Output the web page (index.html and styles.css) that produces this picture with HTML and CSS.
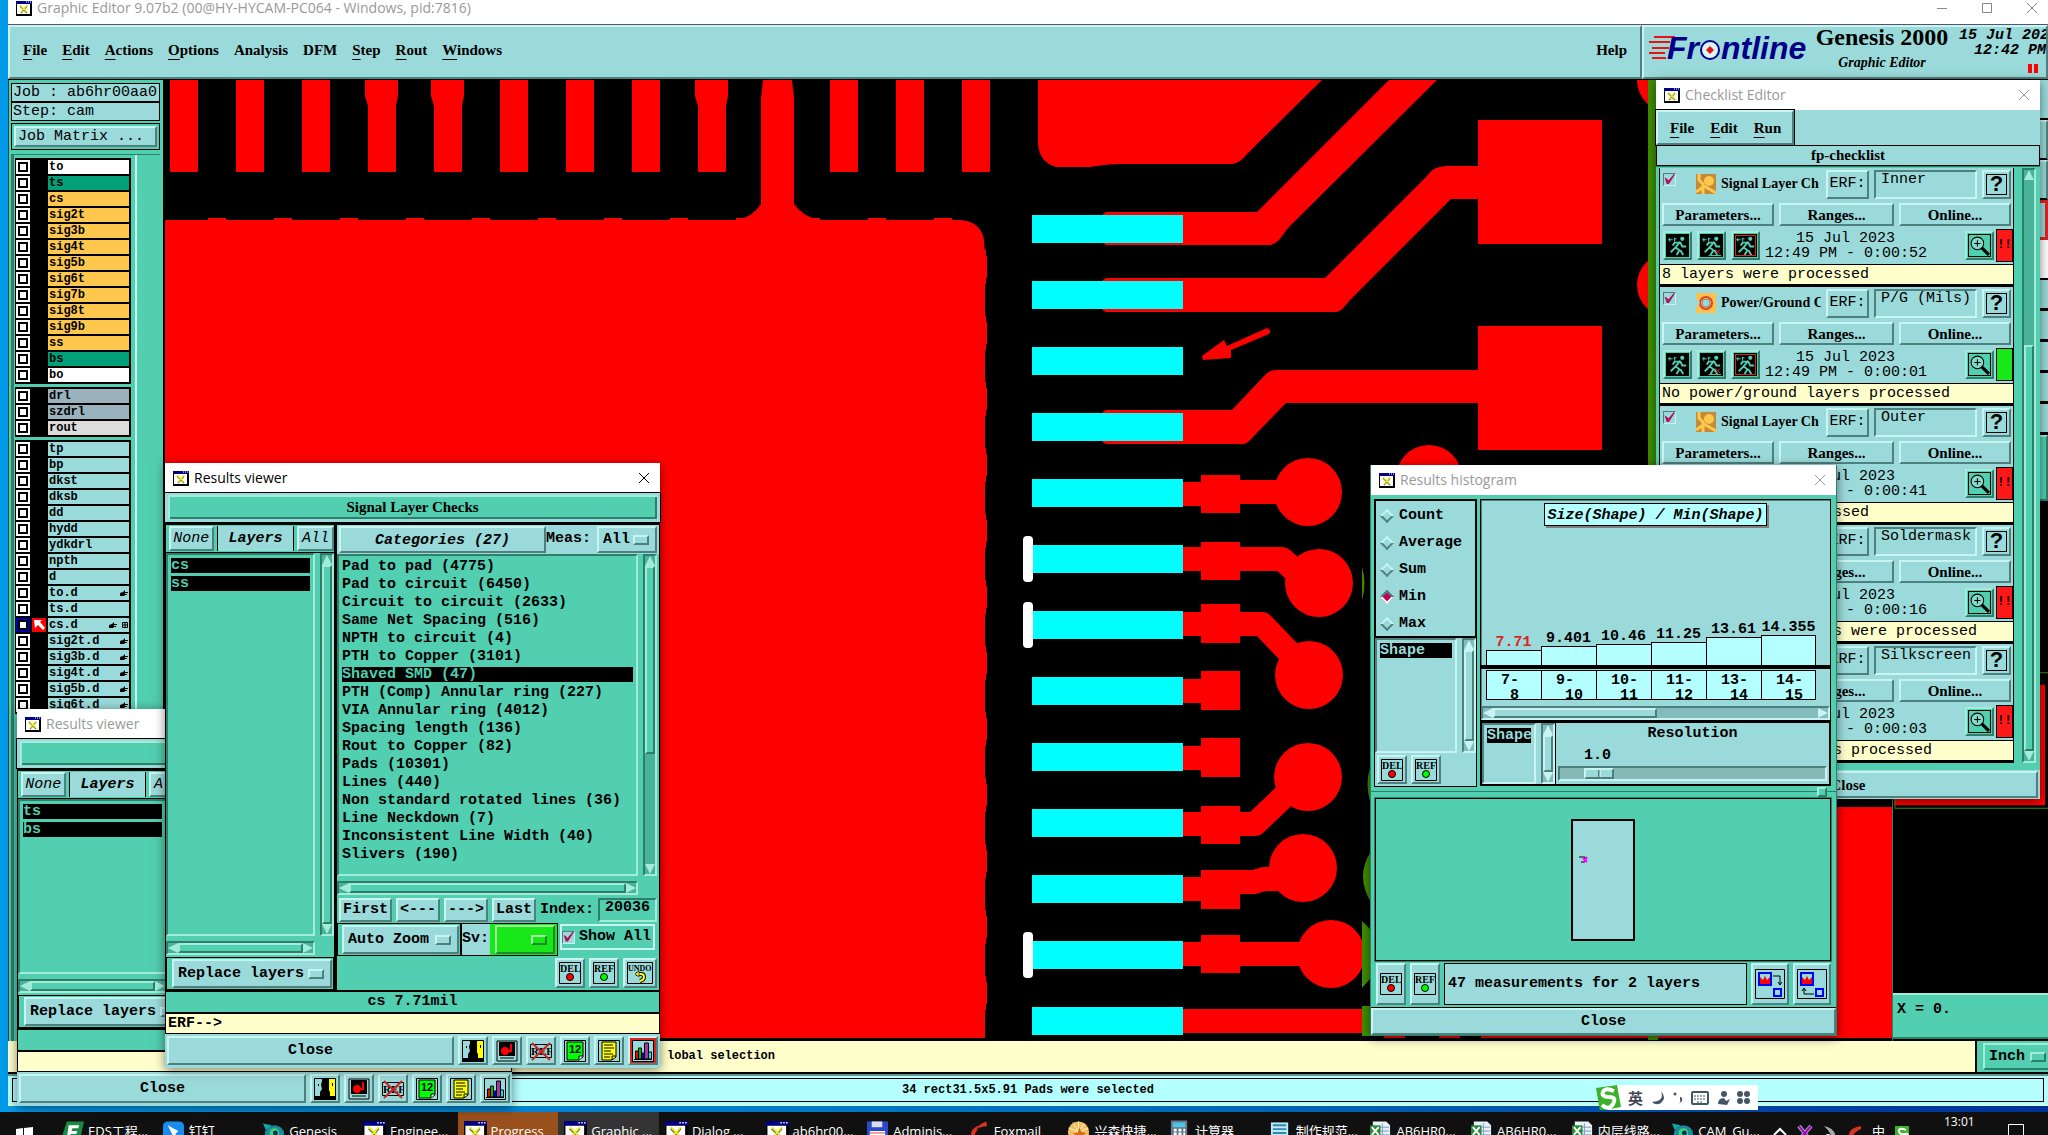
FILE: index.html
```html
<!DOCTYPE html>
<html lang="en">
<head>
  <meta charset="UTF-8">
  <title>Graphic Editor 9.07b2</title>
  <link rel="stylesheet" href="styles.css">
</head>
<body>

<!-- shared icons -->
<svg class="defs" aria-hidden="true">
  <symbol id="i-app" viewBox="0 0 16 15"><path d="M0 0h16v15H0z" fill="#000"/><path d="M1 3h13v10H1z" fill="#fff"/><path d="M0 0h16v3H0z" fill="#008"/><path d="M10 1h1M12 1h1M14 1h1" stroke="#fff"/><path d="M4 5l7 7M11 5l-6 7" stroke="#774" stroke-width="1.500"/><path d="M4 4l7 7M11 4l-6 7" stroke="#ee2" stroke-width="1.200"/></symbol>
  <symbol id="i-close" viewBox="0 0 12 12"><path d="M1 1l10 10M11 1L1 11" stroke="currentColor" fill="none"/></symbol>
  <symbol id="i-hand" viewBox="0 0 8 7"><path d="M0 3l3-1 2-2v2h3v1H5v1h2v1H5l-1 1H0z"/></symbol>
  <symbol id="i-face" viewBox="0 0 22 22"><path d="M0 0h22v22H0z" fill="#9bdada"/><path d="M13 0h9v18h-9z" fill="#ff0"/><path d="M8 0h7v18H8z"/><path d="M8 3l-1 4 1 4-2 3v4h10v-4l-2-3 1-4-1-4z"/><path d="M0 18h22v4H0z"/><path d="M4 6h1v2H4zM18 5h1v3h-1z"/><path d="M.5 .5h21v21H.5z" fill="none" stroke="#000"/></symbol>
  <symbol id="i-stop" viewBox="0 0 22 22"><path d="M1 1h20v20H1z" fill="#9bdada" stroke="#000"/><path d="M3 2h16v14H3z"/><circle cx="9" cy="11" r="4" fill="#f00"/><path d="M10 11h5V4" fill="none" stroke="#f00" stroke-width="2"/><path d="M4 18h14" stroke="#000"/></symbol>
  <symbol id="i-norefs" viewBox="0 0 22 22"><path d="M.5 4.500h21v13H.5z" fill="none" stroke="#000"/><text x="1" y="15" font-size="11" font-family="Liberation Serif">REF</text><path d="M2 3l18 17M20 3L2 20" stroke="#c22" stroke-width="2"/></symbol>
  <symbol id="i-num" viewBox="0 0 22 22"><path d="M.5 .5h21v21H.5z" fill="none" stroke="#000"/><path d="M3 2h16v15l-4 3H3z" fill="#0f0" stroke="#000"/><path d="M15 20v-4h4" fill="#fff" stroke="#000"/><text x="5" y="13" font-size="11" font-weight="bold" font-family="Liberation Sans">12</text></symbol>
  <symbol id="i-note" viewBox="0 0 22 22"><path d="M.5 .5h21v21H.5z" fill="none" stroke="#000"/><path d="M4 2h14v15l-4 3H4z" fill="#ff0" stroke="#000"/><path d="M6 5h9M6 8h10M6 11h7M6 14h9M6 17h6M14 20v-4h4" fill="none" stroke="#000"/></symbol>
  <symbol id="i-bars" viewBox="0 0 22 22"><path d="M.5 .5h21v21H.5z" fill="none" stroke="#000"/><g stroke="#000"><path d="M3.500 11h3v8h-3z" fill="#f00"/><path d="M6.500 8h3v11h-3z" fill="#0b0"/><path d="M9.500 13h3v6h-3z" fill="#00c"/><path d="M12.500 3h4v16h-4z" fill="#a3a"/><path d="M16.500 12h3v7h-3z" fill="#0ee"/></g><path d="M2 19.500h18" stroke="#000"/></symbol>
  <symbol id="i-del" viewBox="0 0 22 22"><path d="M.5 .5h21v21H.5z" fill="none" stroke="#000"/><text x="1" y="10" font-size="10" font-family="Liberation Serif">DEL</text><circle cx="11" cy="15" r="3.500" fill="#f00" stroke="#000"/></symbol>
  <symbol id="i-ref" viewBox="0 0 22 22"><path d="M.5 .5h21v21H.5z" fill="none" stroke="#000"/><text x="1" y="10" font-size="10" font-family="Liberation Serif">REF</text><circle cx="11" cy="15" r="3.500" fill="#0f0" stroke="#000"/></symbol>
  <symbol id="i-undo" viewBox="0 0 26 22"><path d="M.5 .5h25v21H.5z" fill="none" stroke="#000"/><text x="1" y="9" font-size="8" font-family="Liberation Serif">UNDO</text><path d="M9 12h5q3 0 3 3t-4 4" fill="none" stroke="#000" stroke-width="4"/><path d="M9 12h5q3 0 3 3t-4 4" fill="none" stroke="#ff0" stroke-width="2"/><path d="M12 9l-4 3 4 3z" fill="#ff0" stroke="#000" stroke-width=".6"/></symbol>
  <symbol id="i-run" viewBox="0 0 24 24"><path d="M0 0h24v24H0z"/><circle cx="17" cy="5" r="2.200" fill="#52ceb0"/><path d="M15 8l-5 6 4 3-3 5M10 14l-5 5M14 9l-5 0-2 3M15 9l2 4 4 0M15 17l3 5" fill="none" stroke="#52ceb0" stroke-width="2"/><path d="M2 6h5M4 4v4M8 5h3M9 4v4" stroke="#52ceb0"/></symbol>
  <symbol id="i-run-to" viewBox="0 0 24 24"><use href="#i-run"/><path d="M9 22.500h13" stroke="#52ceb0"/><path d="M16 16l5 5M21 16l-5 5" stroke="#d22"/></symbol>
  <symbol id="i-zoom" viewBox="0 0 22 22"><path d="M.5 .5h21v21H.5z" fill="none" stroke="#000"/><circle cx="9" cy="9" r="6" fill="#7fdcc8" stroke="#000"/><path d="M6 9h6M9 6v6" stroke="#000"/><path d="M13 13l7 7" stroke="#000" stroke-width="3"/></symbol>
  <symbol id="i-signal" viewBox="0 0 20 20"><path d="M0 0h20v20H0z" fill="#c48a3c"/><path d="M3 0v6l4 4v10M0 18l7-5M8 12l12 7" stroke="#ffc84c" stroke-width="3" fill="none"/><circle cx="13" cy="7" r="5" fill="#ffc84c"/></symbol>
  <symbol id="i-power" viewBox="0 0 20 20"><path d="M0 0h20v20H0z" fill="#ffc04c"/><circle cx="10" cy="10" r="6" fill="none" stroke="#d42" stroke-width="2"/><circle cx="10" cy="10" r="4" fill="#9bdada" stroke="#888"/><path d="M0 5l4 5-4 5z" fill="#9bdada"/></symbol>
  <symbol id="i-sheet" viewBox="0 0 24 24"><path d="M4 1h14l4 4v18H4z" fill="#e8f0f8"/><path d="M8 7h13M8 11h13M8 15h13M14 3v18" stroke="#7b9cc8"/><path d="M1 5h11v12H1z" fill="#2a8a3a"/><path d="M3 7l7 8M10 7l-7 8" stroke="#fff" stroke-width="2"/></symbol>
  <symbol id="i-genesis" viewBox="0 0 24 24"><path d="M1 3l9 2-6 5z" fill="#1aa"/><ellipse cx="13" cy="14" rx="10" ry="9" fill="#1a8a9c"/><circle cx="13" cy="13" r="5" fill="#3fd07a"/><circle cx="14" cy="13" r="2.500" fill="#135"/></symbol>
</svg>

<div class="screen">

  <main class="editor">
    <div class="titlebar titlebar-main">
      <svg class="app-icon"><use href="#i-app"/></svg>
      <span>Graphic Editor 9.07b2 (00@HY-HYCAM-PC064 - Windows, pid:7816)</span>
      <svg class="win-buttons" width="102" height="14" viewBox="0 0 102 14" fill="none" stroke="#888"><path d="M1 7.500h10M46.500 2.500h9v9h-9zM91 2l10 10M101 2L91 12"/></svg>
    </div>

    <header class="topbar">
      <nav class="menubar raised">
        <a href="#"><u>F</u>ile</a><a href="#"><u>E</u>dit</a><a href="#"><u>A</u>ctions</a><a href="#"><u>O</u>ptions</a><a href="#">Analysis</a><a href="#">DFM</a><a href="#"><u>S</u>tep</a><a href="#"><u>R</u>out</a><a href="#"><u>W</u>indows</a>
        <a class="help" href="#">Help</a>
      </nav>
      <div class="brand raised">
        <svg width="162" height="34" viewBox="0 0 162 34">
          <path d="M6 4h21M1 9h21M4 15h17M1 20h16M4 25h14" stroke="#e11" stroke-width="2"/>
          <g fill="#008" font-family="Liberation Sans" font-weight="bold" font-style="italic" font-size="32"><text x="19" y="26">Fr</text><text x="73" y="26">ntline</text></g>
          <circle cx="62" cy="17" r="9" fill="#d8f4f4" stroke="#008" stroke-width="2"/><path d="M62 13l4 4-4 4-4-4z" fill="#e11"/>
        </svg>
        <div class="brand-name"><b>Genesis 2000</b><i>Graphic Editor</i></div>
        <div class="brand-date"><span>15 Jul 2023</span><span>12:42 PM</span><svg width="10" height="9" viewBox="0 0 10 9"><path d="M0 0h4v9H0zM6 0h4v9H6z" fill="#f00"/></svg></div>
      </div>
    </header>

    <div class="workspace">
      <aside class="sidebar">
        <div class="job-line">Job : ab6hr00aa0</div>
        <div class="job-line">Step: cam</div>
        <div class="job-matrix"><button class="raised teal">Job Matrix ...</button></div>
        <div class="layer-panel">
          <div class="layers">
            <div class="layer-group">
              <label class="layer white"><input type="checkbox"><span>to</span></label>
              <label class="layer mask"><input type="checkbox"><span>ts</span></label>
              <label class="layer signal"><input type="checkbox"><span>cs</span></label>
              <label class="layer signal"><input type="checkbox"><span>sig2t</span></label>
              <label class="layer signal"><input type="checkbox"><span>sig3b</span></label>
              <label class="layer signal"><input type="checkbox"><span>sig4t</span></label>
              <label class="layer signal"><input type="checkbox"><span>sig5b</span></label>
              <label class="layer signal"><input type="checkbox"><span>sig6t</span></label>
              <label class="layer signal"><input type="checkbox"><span>sig7b</span></label>
              <label class="layer signal"><input type="checkbox"><span>sig8t</span></label>
              <label class="layer signal"><input type="checkbox"><span>sig9b</span></label>
              <label class="layer signal"><input type="checkbox"><span>ss</span></label>
              <label class="layer mask"><input type="checkbox"><span>bs</span></label>
              <label class="layer white"><input type="checkbox"><span>bo</span></label>
            </div>
            <div class="layer-group">
              <label class="layer drill"><input type="checkbox"><span>drl</span></label>
              <label class="layer drill"><input type="checkbox"><span>szdrl</span></label>
              <label class="layer rout"><input type="checkbox"><span>rout</span></label>
            </div>
            <div class="layer-group">
              <label class="layer"><input type="checkbox"><span>tp</span></label>
              <label class="layer"><input type="checkbox"><span>bp</span></label>
              <label class="layer"><input type="checkbox"><span>dkst</span></label>
              <label class="layer"><input type="checkbox"><span>dksb</span></label>
              <label class="layer"><input type="checkbox"><span>dd</span></label>
              <label class="layer"><input type="checkbox"><span>hydd</span></label>
              <label class="layer"><input type="checkbox"><span>ydkdrl</span></label>
              <label class="layer"><input type="checkbox"><span>npth</span></label>
              <label class="layer"><input type="checkbox"><span>d</span></label>
              <label class="layer"><input type="checkbox"><span>to.d<svg><use href="#i-hand"/></svg></span></label>
              <label class="layer"><input type="checkbox"><span>ts.d</span></label>
              <label class="layer active"><input type="checkbox"><svg class="work" viewBox="0 0 14 14"><path d="M0 0h14v14H0z" fill="#f00"/><path d="M2 2h8L8 4l5 6-2 2-5-5-3 3z" fill="#fff"/></svg><span>cs.d<svg><use href="#i-hand"/></svg><svg class="grid-mark" viewBox="0 0 6 6"><path d="M.5 .5h5v5h-5zM3 0v6M0 3h6" fill="none" stroke="#000"/></svg></span></label>
              <label class="layer"><input type="checkbox"><span>sig2t.d<svg><use href="#i-hand"/></svg></span></label>
              <label class="layer"><input type="checkbox"><span>sig3b.d<svg><use href="#i-hand"/></svg></span></label>
              <label class="layer"><input type="checkbox"><span>sig4t.d<svg><use href="#i-hand"/></svg></span></label>
              <label class="layer"><input type="checkbox"><span>sig5b.d<svg><use href="#i-hand"/></svg></span></label>
              <label class="layer"><input type="checkbox"><span>sig6t.d<svg><use href="#i-hand"/></svg></span></label>
            </div>
          </div>
        </div>
      </aside>

      <!-- board view -->
      <svg class="board" viewBox="165 80 1727 961" preserveAspectRatio="xMinYMin slice">
        <g fill="#f00">
          <path d="M170 80h28v92h-28zM236 80h28v92h-28zM302 80h28v92h-28zM500 80h28v92h-28zM566 80h28v92h-28zM632 80h28v92h-28zM830 80h28v92h-28zM896 80h28v92h-28zM962 80h28v92h-28z"/>
          <path d="M365 80h33v16l-2 10v66h-28v-66l-3-10zM431 80h33v16l-2 10v66h-28v-66l-3-10zM695 80h33v16l-2 10v66h-28v-66l-3-10z"/>
          <path d="M165 220H736q16-2 25-16V98l2-18h29l2 18v106q10 14 27 16H961q20 2 23 20l1 14V1038H165z"/>
          <path d="M1038 80H1322L1247 154q-6 8-14 10H1120q-12 0-30 3H1056q-17-5-18-24z"/>
          <path d="M1106 212H1257L1389 80h48L1288 228 1279 240q-4 4-8 5H1106q-8-3-8-16t8-17z"/>
          <path d="M1106 278H1325L1428 175q4-8 18-9h32v33h-27L1350 300l-5 6q-4 5-8 6H1106q-8-3-8-17t8-17z"/>
          <path d="M1106 410H1232L1266 374q4-4 12-4h200v33H1286l-34 35q-4 5-8 6H1106q-8-3-8-17t8-17z"/>
          <path d="M1478 120h124v124h-124zM1478 326h124v124h-124z"/>
          <path d="M1201 475h39v38h-39zM1201 542h39v38h-39zM1201 604h39v39h-39zM1201 671h39v39h-39zM1201 738h39v39h-39zM1201 806h39v38h-39zM1201 870h39v39h-39zM1201 935h39v38h-39z"/>
          <circle cx="1308" cy="492" r="34"/><circle cx="1319" cy="583" r="34"/><circle cx="1309" cy="675" r="34"/><circle cx="1308" cy="777" r="34"/><circle cx="1303" cy="868" r="34"/><circle cx="1331" cy="954" r="34"/>
          <circle cx="1429" cy="478" r="33"/><circle cx="1669" cy="80" r="32"/><circle cx="1669" cy="285" r="32"/>
          <path d="M1202 356l22-16 3 6 40-18q5 2 2 6l-38 16v8l-28 2z"/>
          <path d="M1183 1009h180v24h-180zM1384 1030h21v8h-21zM1439 1030h21v8h-21zM1481 1030h120v8h-120zM1600 807h292v231h-292z"/>
        </g>
        <g fill="none" stroke="#f00" stroke-width="24" stroke-linejoin="round">
          <path d="M1183 494h20M1240 492h50M1183 559h99l20 18M1183 624h79l45 47M1183 691h20M1183 758h20M1183 824h72l44-42M1183 889h20M1240 882h14l10-3h30M1183 954h130"/>
        </g>
        <path d="M208 219H980" stroke="#f00" stroke-width="2" stroke-dasharray="18 48"/>
        <path d="M985 250V1038" stroke="#f00" stroke-width="2" stroke-dasharray="34 32"/>
        <path d="M986 256V1038" stroke="#f00" stroke-width="2" stroke-dasharray="22 44"/>
        <path fill="#0ff" d="M1032 215h151v28h-151zM1032 281h151v28h-151zM1032 347h151v28h-151zM1032 413h151v28h-151zM1032 479h151v28h-151zM1032 545h151v28h-151zM1032 611h151v28h-151zM1032 677h151v28h-151zM1032 743h151v28h-151zM1032 809h151v28h-151zM1032 875h151v28h-151zM1032 941h151v28h-151zM1032 1007h151v28h-151z"/>
        <g fill="#fff"><rect x="1023" y="536" width="10" height="46" rx="4"/><rect x="1023" y="602" width="10" height="46" rx="4"/><rect x="1023" y="932" width="10" height="46" rx="4"/></g>
        <path fill="#3f8f00" d="M1648 80h10v960h-10zM1362 567q5 16 0 33zM1370 768q-5 16 0 33zM1372 850q-18 26 0 54zM1362 921l8 8v50l-8 9zM1362 1006h16v30h-16z"/>
      </svg>

      <aside class="toolbox">
        <div class="tool teal"></div>
        <div class="tool teal raised"></div>
        <div class="tool teal raised"></div>
        <div class="tool tool-red"></div>
        <div class="tool tool-blank"></div>
        <div class="tool-rows"><i></i><i></i><i></i><i></i><i></i></div>
        <div class="tool-end green raised"></div>
        <svg class="overview" viewBox="1892 502 156 490" preserveAspectRatio="none"><path d="M1893 685h152v120h-152z" fill="#f00"/><path d="M1894 673h160v135h-160z" fill="none" stroke="#3f8f00"/></svg>
        <div class="coords">X = 0.</div>
      </aside>
    </div>

    <div class="command">
      <div class="prompt"><span>lobal selection</span></div>
      <label class="option green raised"><select aria-label="Units"><option>Inch</option></select></label>
    </div>
    <footer class="status">34 rect31.5x5.91 Pads were selected</footer>
  </main>

  <!-- Checklist -->
  <section class="window checklist">
    <div class="titlebar">
      <svg class="app-icon"><use href="#i-app"/></svg><span>Checklist Editor</span>
      <button class="close-x" aria-label="Close"><svg><use href="#i-close"/></svg></button>
    </div>
    <nav class="check-menu raised teal"><a href="#"><u>F</u>ile</a><a href="#"><u>E</u>dit</a><a href="#"><u>R</u>un</a></nav>
    <h2 class="check-name">fp-checklist</h2>
    <div class="check-body green">
      <div class="cards">
        <article class="card">
          <div class="card-head"><input type="checkbox" class="tick" aria-label="Run" checked><svg><use href="#i-signal"/></svg><h3>Signal Layer Ch</h3><button class="raised">ERF:</button><input class="sunken" aria-label="ERF" value="Inner"><button class="raised query">?</button></div>
          <div class="card-links"><button class="raised">Parameters...</button><button class="raised">Ranges...</button><button class="raised">Online...</button></div>
          <div class="card-run"><button class="green raised"><svg><use href="#i-run"/></svg></button><button class="green raised"><svg><use href="#i-run-to"/></svg></button><button class="green raised stop"><svg><use href="#i-run"/></svg></button><p><span>15 Jul 2023</span>12:49 PM - 0:00:52</p><button class="green raised"><svg><use href="#i-zoom"/></svg></button><b class="flag">!!</b></div>
          <p class="card-msg">8 layers were processed</p>
        </article>
        <article class="card">
          <div class="card-head"><input type="checkbox" class="tick" aria-label="Run" checked><svg><use href="#i-power"/></svg><h3>Power/Ground C</h3><button class="raised">ERF:</button><input class="sunken" aria-label="ERF" value="P/G (Mils)"><button class="raised query">?</button></div>
          <div class="card-links"><button class="raised">Parameters...</button><button class="raised">Ranges...</button><button class="raised">Online...</button></div>
          <div class="card-run"><button class="green raised"><svg><use href="#i-run"/></svg></button><button class="green raised"><svg><use href="#i-run-to"/></svg></button><button class="green raised stop"><svg><use href="#i-run"/></svg></button><p><span>15 Jul 2023</span>12:49 PM - 0:00:01</p><button class="green raised"><svg><use href="#i-zoom"/></svg></button><b class="flag ok"></b></div>
          <p class="card-msg">No power/ground layers processed</p>
        </article>
        <article class="card">
          <div class="card-head"><input type="checkbox" class="tick" aria-label="Run" checked><svg><use href="#i-signal"/></svg><h3>Signal Layer Ch</h3><button class="raised">ERF:</button><input class="sunken" aria-label="ERF" value="Outer"><button class="raised query">?</button></div>
          <div class="card-links"><button class="raised">Parameters...</button><button class="raised">Ranges...</button><button class="raised">Online...</button></div>
          <div class="card-run"><button class="green raised"><svg><use href="#i-run"/></svg></button><button class="green raised"><svg><use href="#i-run-to"/></svg></button><button class="green raised stop"><svg><use href="#i-run"/></svg></button><p><span>15 Jul 2023</span>12:49 PM - 0:00:41</p><button class="green raised"><svg><use href="#i-zoom"/></svg></button><b class="flag">!!</b></div>
          <p class="card-msg">2 layers were processed</p>
        </article>
        <article class="card">
          <div class="card-head"><input type="checkbox" class="tick" aria-label="Run" checked><svg><use href="#i-signal"/></svg><h3>Solder Mask Ch</h3><button class="raised">ERF:</button><input class="sunken" aria-label="ERF" value="Soldermask"><button class="raised query">?</button></div>
          <div class="card-links"><button class="raised">Parameters...</button><button class="raised">Ranges...</button><button class="raised">Online...</button></div>
          <div class="card-run"><button class="green raised"><svg><use href="#i-run"/></svg></button><button class="green raised"><svg><use href="#i-run-to"/></svg></button><button class="green raised stop"><svg><use href="#i-run"/></svg></button><p><span>15 Jul 2023</span>12:49 PM - 0:00:16</p><button class="green raised"><svg><use href="#i-zoom"/></svg></button><b class="flag">!!</b></div>
          <p class="card-msg">2 solder mask layers were processed</p>
        </article>
        <article class="card">
          <div class="card-head"><input type="checkbox" class="tick" aria-label="Run" checked><svg><use href="#i-signal"/></svg><h3>Silk Screen Ch</h3><button class="raised">ERF:</button><input class="sunken" aria-label="ERF" value="Silkscreen"><button class="raised query">?</button></div>
          <div class="card-links"><button class="raised">Parameters...</button><button class="raised">Ranges...</button><button class="raised">Online...</button></div>
          <div class="card-run"><button class="green raised"><svg><use href="#i-run"/></svg></button><button class="green raised"><svg><use href="#i-run-to"/></svg></button><button class="green raised stop"><svg><use href="#i-run"/></svg></button><p><span>15 Jul 2023</span>12:49 PM - 0:00:03</p><button class="green raised"><svg><use href="#i-zoom"/></svg></button><b class="flag">!!</b></div>
          <p class="card-msg">2 silk screen layers processed</p>
        </article>
      </div>
      <div class="vscroll"><i class="up"></i><b class="gap"></b><b class="thumb"></b><i class="down"></i></div>
    </div>
    <button class="check-close raised teal">Close</button>
  </section>

  <!-- Results viewer at the back -->
  <section class="window viewer viewer-back">
    <div class="titlebar"><svg class="app-icon"><use href="#i-app"/></svg><span>Results viewer</span></div>
    <h2 class="viewer-name"></h2>
    <div class="viewer-body">
      <div class="viewer-left">
        <div class="left-head"><button class="raised teal">None</button><b>Layers</b><button class="raised teal">All</button></div>
        <div class="scroll-area green">
          <ul class="list sunken"><li class="selected">ts</li><li class="selected">bs</li></ul>
          <div class="vscroll"><i class="up"></i><b class="thumb"></b><i class="down"></i></div>
          <div class="hscroll"><i class="left"></i><b class="thumb"></b><i class="right"></i></div>
        </div>
        <div class="replace"><label class="option teal raised"><select aria-label="Layer action"><option>Replace layers</option></select></label></div>
      </div>
      <div class="viewer-right"></div>
    </div>
    <div class="measure"></div>
    <div class="erf"></div>
    <div class="viewer-foot teal">
      <button class="raised">Close</button>
      <button class="raised" aria-label="Profile"><svg><use href="#i-face"/></svg></button>
      <button class="raised" aria-label="Stop"><svg><use href="#i-stop"/></svg></button>
      <button class="raised" aria-label="No reference"><svg><use href="#i-norefs"/></svg></button>
      <button class="raised" aria-label="Count"><svg><use href="#i-num"/></svg></button>
      <button class="raised" aria-label="Note"><svg><use href="#i-note"/></svg></button>
      <button class="raised" aria-label="Histogram"><svg><use href="#i-bars"/></svg></button>
    </div>
  </section>

  <!-- Results viewer in front -->
  <section class="window viewer viewer-front">
    <div class="titlebar active">
      <svg class="app-icon"><use href="#i-app"/></svg><span>Results viewer</span>
      <button class="close-x" aria-label="Close"><svg><use href="#i-close"/></svg></button>
    </div>
    <h2 class="viewer-name">Signal Layer Checks</h2>
    <div class="viewer-body">
      <div class="viewer-left">
        <div class="left-head"><button class="raised teal">None</button><b>Layers</b><button class="raised teal">All</button></div>
        <div class="scroll-area green">
          <ul class="list sunken"><li class="selected">cs</li><li class="selected">ss</li></ul>
          <div class="vscroll"><i class="up"></i><b class="thumb"></b><i class="down"></i></div>
          <div class="hscroll"><i class="left"></i><b class="thumb"></b><i class="right"></i></div>
        </div>
        <div class="replace"><label class="option teal raised"><select aria-label="Layer action"><option>Replace layers</option></select></label></div>
      </div>
      <div class="viewer-right">
        <div class="right-head"><button class="raised teal">Categories (27)</button><label for="meas">Meas:</label><span class="option teal raised"><select id="meas"><option>All</option></select></span></div>
        <div class="scroll-area green">
          <ul class="list sunken">
            <li>Pad to pad (4775)</li>
            <li>Pad to circuit (6450)</li>
            <li>Circuit to circuit (2633)</li>
            <li>Same Net Spacing (516)</li>
            <li>NPTH to circuit (4)</li>
            <li>PTH to Copper (3101)</li>
            <li class="selected">Shaved SMD (47)</li>
            <li>PTH (Comp) Annular ring (227)</li>
            <li>VIA Annular ring (4012)</li>
            <li>Spacing length (136)</li>
            <li>Rout to Copper (82)</li>
            <li>Pads (10301)</li>
            <li>Lines (440)</li>
            <li>Non standard rotated lines (36)</li>
            <li>Line Neckdown (7)</li>
            <li>Inconsistent Line Width (40)</li>
            <li>Slivers (190)</li>
          </ul>
          <div class="vscroll"><i class="up"></i><b class="thumb"></b><b class="gap"></b><i class="down"></i></div>
          <div class="hscroll"><i class="left"></i><b class="thumb"></b><i class="right"></i></div>
        </div>
        <div class="nav-row green"><button class="raised teal">First</button><button class="raised teal">&lt;---</button><button class="raised teal">---&gt;</button><button class="raised teal">Last</button><label for="index">Index:</label><input id="index" class="sunken" value="20036"></div>
        <div class="zoom-row">
          <div class="zoom-cell"><label class="option teal raised"><select aria-label="Zoom mode"><option>Auto Zoom</option></select></label></div>
          <label class="sv" for="sv">Sv:</label>
          <div class="sv-cell"><span class="option raised"><select id="sv"><option> </option></select></span></div>
          <label class="show-all"><input type="checkbox" class="tick" checked>Show All</label>
        </div>
        <div class="edit-row teal">
          <button class="raised" aria-label="Delete"><svg><use href="#i-del"/></svg></button>
          <button class="raised" aria-label="Reference"><svg><use href="#i-ref"/></svg></button>
          <button class="raised undo" aria-label="Undo"><svg><use href="#i-undo"/></svg></button>
        </div>
      </div>
    </div>
    <div class="measure">cs 7.71mil</div>
    <div class="erf">ERF--&gt;</div>
    <div class="viewer-foot teal">
      <button class="raised">Close</button>
      <button class="raised" aria-label="Profile"><svg><use href="#i-face"/></svg></button>
      <button class="raised" aria-label="Stop"><svg><use href="#i-stop"/></svg></button>
      <button class="raised" aria-label="No reference"><svg><use href="#i-norefs"/></svg></button>
      <button class="raised" aria-label="Count"><svg><use href="#i-num"/></svg></button>
      <button class="raised" aria-label="Note"><svg><use href="#i-note"/></svg></button>
      <button class="raised on" aria-label="Histogram"><svg><use href="#i-bars"/></svg></button>
    </div>
  </section>

  <!-- Histogram -->
  <section class="window histogram">
    <div class="titlebar">
      <svg class="app-icon"><use href="#i-app"/></svg><span>Results histogram</span>
      <button class="close-x" aria-label="Close"><svg><use href="#i-close"/></svg></button>
    </div>
    <div class="hist-top teal">
      <div class="hist-left">
        <div class="radios">
          <label><input type="radio" name="stat">Count</label>
          <label><input type="radio" name="stat">Average</label>
          <label><input type="radio" name="stat">Sum</label>
          <label><input type="radio" name="stat" checked>Min</label>
          <label><input type="radio" name="stat">Max</label>
        </div>
        <div class="shape-area"><ul class="list sunken"><li class="selected">Shape</li></ul><div class="vscroll"><i class="up"></i><b class="thumb"></b><i class="down"></i></div></div>
        <div class="hist-edit"><button class="raised" aria-label="Delete"><svg><use href="#i-del"/></svg></button><button class="raised" aria-label="Reference"><svg><use href="#i-ref"/></svg></button></div>
      </div>
      <div class="hist-right">
        <div class="chart">
          <h3>Size(Shape) / Min(Shape)</h3>
          <div class="bars">
            <div class="low"><span>7.71</span><i style="height:15px"></i></div>
            <div><span>9.401</span><i style="height:19px"></i></div>
            <div><span>10.46</span><i style="height:21px"></i></div>
            <div><span>11.25</span><i style="height:23px"></i></div>
            <div><span>13.61</span><i style="height:28px"></i></div>
            <div><span>14.355</span><i style="height:30px"></i></div>
          </div>
          <div class="ranges"><p>7-<span>8</span></p><p>9-<span>10</span></p><p>10-<span>11</span></p><p>11-<span>12</span></p><p>13-<span>14</span></p><p>14-<span>15</span></p></div>
          <div class="hscroll"><i class="left"></i><b class="thumb"></b><b class="gap"></b><i class="right"></i></div>
        </div>
        <div class="resolution">
          <ul class="list sunken"><li class="selected">Shape</li></ul>
          <div class="vscroll"><i class="up"></i><b class="thumb"></b><i class="down"></i></div>
          <div class="slider"><label for="res">Resolution</label><output>1.0</output><input id="res" type="range" min="0" max="10" value="1"></div>
        </div>
      </div>
    </div>
    <div class="splitter"><i class="green raised"></i></div>
    <div class="map"><svg width="64" height="122" viewBox="0 0 64 122"><path d="M1 1h62v120H1z" fill="#9bdada" stroke="#000" stroke-width="2"/><path d="M8 38h6v5h-4" fill="none" stroke="#000"/><path d="M12 39l4 4M16 38l-3 5" stroke="#f0f" stroke-width="2"/></svg></div>
    <div class="hist-info teal">
      <button class="raised" aria-label="Delete"><svg><use href="#i-del"/></svg></button>
      <button class="raised" aria-label="Reference"><svg><use href="#i-ref"/></svg></button>
      <p>47 measurements for 2 layers</p>
      <button class="raised wide" aria-label="Send"><svg viewBox="0 0 30 30"><path d="M.5 .5h29v29H.5z" fill="none" stroke="#000"/><path d="M4 4h12v12H4z" fill="#9bdada" stroke="#00f" stroke-width="2"/><path d="M5 15V8l3 3 2-4 2 4 3-3v7z" fill="#f00"/><path d="M19 20h7v7h-7z" fill="none" stroke="#00f" stroke-width="2"/><path d="M18 7h7v9M23 13l2 3 2-3" fill="none" stroke="#000"/></svg></button>
      <button class="raised wide" aria-label="Load"><svg viewBox="0 0 30 30"><path d="M.5 .5h29v29H.5z" fill="none" stroke="#000"/><path d="M4 4h12v12H4z" fill="#9bdada" stroke="#00f" stroke-width="2"/><path d="M5 15V8l3 3 2-4 2 4 3-3v7z" fill="#f00"/><path d="M19 20h7v7h-7z" fill="none" stroke="#00f" stroke-width="2"/><path d="M17 25H7v-5M5 22l2-3 2 3" fill="none" stroke="#000"/></svg></button>
    </div>
    <button class="hist-close raised teal">Close</button>
  </section>

  <!-- input method bar -->
  <div class="ime">
    <svg class="ime-logo" viewBox="0 0 28 26"><path d="M2 3L23 0l4 22-21 4z" fill="#3ab22a"/><path d="M20 6q-9-4-11 1t6 5 4 7-11 1" fill="none" stroke="#fff" stroke-width="4"/></svg>
    <span>英</span>
    <svg width="104" height="16" viewBox="0 0 104 16" fill="#456"><path d="M12 1q4 10-9 11q4 4 9 1q6-5 0-12z"/><circle cx="26" cy="4" r="1.500"/><path d="M31 7q3 0 2 4l-3 3q2-3 1-4z"/><rect x="43" y="2" width="16" height="12" rx="1" fill="none" stroke="#456" stroke-width="2"/><path d="M45 6h12M45 9h12M48 12h6" stroke="#456" stroke-dasharray="2 1"/><circle cx="75" cy="4" r="3"/><path d="M69 14q0-6 6-6l2 3 4-2-3 6z"/><circle cx="91" cy="4" r="3"/><circle cx="98" cy="4" r="3"/><circle cx="91" cy="11" r="3"/><circle cx="98" cy="11" r="3"/></svg>
  </div>

  <div class="taskbar">
    <button class="start" aria-label="Start"><svg viewBox="0 0 17 17"><path d="M0 2l7-1v7H0zM8 1l9-1v8H8zM0 9h7v7l-7-1zM8 9h9v8l-9-1z" fill="#fff"/></svg></button>
    <div class="tasks">
      <a href="#"><svg viewBox="0 0 24 24"><path d="M6 1h18l-4 18-16 4L0 20z" fill="#1a8a44"/><path d="M8 5h11l-1 3h-6l-1 3h6l-1 3h-6l-1 5H6z" fill="#fff"/></svg>EDS工程...</a>
      <a href="#"><svg viewBox="0 0 24 24"><rect x="1" y="1" width="22" height="22" rx="5" fill="#1a8cf0"/><path d="M6 5l11 6-3 3 1 3-4-2z" fill="#fff"/></svg>钉钉</a>
      <a href="#"><svg><use href="#i-genesis"/></svg>Genesis</a>
      <a href="#"><svg><use href="#i-app"/></svg>Enginee...</a>
      <a href="#" class="alert"><svg><use href="#i-app"/></svg>Progress</a>
      <a href="#" class="current"><svg><use href="#i-app"/></svg>Graphic ...</a>
      <a href="#"><svg><use href="#i-app"/></svg>Dialog ...</a>
      <a href="#"><svg><use href="#i-app"/></svg>ab6hr00...</a>
      <a href="#"><svg viewBox="0 0 24 24"><path d="M1 1h22v22H1z" fill="#2a48c8"/><path d="M6 1h11v6H6z" fill="#dde"/><path d="M4 11h16v12H4z" fill="#fff"/><path d="M4 13h16M4 17h16" stroke="#d44"/></svg>Adminis...</a>
      <a href="#"><svg viewBox="0 0 24 24"><path d="M20 1l1 5q-9 0-11 5 0-6 10-10zM12 5Q4 9 4 15q0 7 7 8 6 0 7-6l-2-2h-4l-1 3h3q-2 3-5 1-3-5 3-10z" fill="#d32"/></svg>Foxmail</a>
      <a href="#"><svg viewBox="0 0 24 24"><circle cx="12" cy="12" r="11" fill="#f0c060"/><path d="M12 12L6 2M12 12L2 8M12 12V1M12 12l6-9M12 12l10-4" stroke="#fff3c8"/><path d="M13 7l2 5 5 1-4 3 1 5-4-3-5 3 2-5-4-3h5z" fill="#d86a10"/></svg>兴森快捷...</a>
      <a href="#"><svg viewBox="0 0 24 24"><path d="M3 0h17v24H3z" fill="#678"/><path d="M5 2h13v5H5z" fill="#4cc4ea"/><path d="M6 10h3M11 10h3M16 10h2M6 14h3M11 14h3M16 14h2M6 18h3M11 18h3M16 18h2" stroke="#fff" stroke-width="3"/></svg>计算器</a>
      <a href="#"><svg viewBox="0 0 24 24"><path d="M2 2h18v22H2z" fill="#bfe8f8"/><path d="M4 5h14M4 9h14M4 13h14M4 17h14" stroke="#38a" stroke-width="2"/></svg>制作规范...</a>
      <a href="#"><svg><use href="#i-sheet"/></svg>AB6HR0...</a>
      <a href="#"><svg><use href="#i-sheet"/></svg>AB6HR0...</a>
      <a href="#"><svg><use href="#i-sheet"/></svg>内层线路...</a>
      <a href="#"><svg><use href="#i-genesis"/></svg>CAM_Gu...</a>
    </div>
    <div class="tray">
      <svg viewBox="0 0 16 16"><path d="M2 10l6-6 6 6" fill="none" stroke="#fff" stroke-width="2"/></svg>
      <svg viewBox="0 0 16 16"><path d="M2 1l11 14M14 1L2 15" stroke="#a2a8c8" stroke-width="4"/><path d="M2 1l11 14M14 1L2 15" stroke="#a0b" stroke-width="2"/></svg>
      <svg viewBox="0 0 16 16"><path d="M2 1q12 2 12 14l-4-3q-3-7-8-11z" fill="#aaa"/><circle cx="6" cy="12" r="3" fill="#eee"/></svg>
      <svg viewBox="0 0 16 16"><path d="M14 1Q2 3 2 10q0 5 5 5 5 0 6-5H8l-1 2q-3-3 7-8z" fill="#d32"/></svg>
      <span>中</span>
      <svg viewBox="0 0 16 16"><path d="M1 1h14v15H1z" fill="#3ab22a"/><path d="M12 5q-7-3-7 1t6 3-1 5l-6-1" fill="none" stroke="#fff" stroke-width="2"/></svg>
    </div>
    <time>13:01</time>
    <svg class="notify" viewBox="0 0 16 16"><path d="M.5 .5h15v13h-15z" fill="none" stroke="#fff"/></svg>
  </div>

</div>

</body>
</html>
```
FILE: styles.css
```css
* {
  box-sizing: border-box;
}

body {
  margin: 0;
  font: bold 15px/18px "Liberation Mono", monospace;
  color: #000;
}

.screen {
  --bg: #9bdada;
  --hi: #c8f4f2;
  --lo: #4f8080;
  position: relative;
  height: 100vh;
  overflow: hidden;
  display: flex;
  flex-direction: column;
  background: linear-gradient(to right, #009ae8, #0068b8 60%, #00309a);
}

.defs {
  position: absolute;
  width: 0;
  height: 0;
}

a {
  color: inherit;
  text-decoration: none;
}

button, input, select {
  font: inherit;
  color: inherit;
  margin: 0;
  padding: 0;
  border: 0;
  background: transparent;
  border-radius: 0;
}

h2, h3, p, ul {
  margin: 0;
  padding: 0;
  font-size: inherit;
  list-style: none;
}

u {
  text-underline-offset: 4px;
}

.teal {
  --bg: #9bdada;
  --hi: #c8f4f2;
  --lo: #4f8080;
}

.green {
  --bg: #52ceb0;
  --hi: #a4ecda;
  --lo: #2e7f68;
}

.raised {
  background: var(--bg);
  border: 2px solid;
  border-color: var(--hi) var(--lo) var(--lo) var(--hi);
}

.sunken {
  border: 2px solid;
  border-color: var(--lo) var(--hi) var(--hi) var(--lo);
}

/* option menus */
.option {
  display: flex;
  align-items: center;
  padding: 0 6px 0 4px;
}

.option select {
  flex: 1;
  min-width: 0;
  appearance: none;
}

.option::after {
  content: "";
  width: 12px;
  height: 6px;
  border: 2px solid;
  border-color: var(--hi) var(--lo) var(--lo) var(--hi);
}

/* scroll bars */
.vscroll, .hscroll {
  display: flex;
  border: 2px solid;
  border-color: var(--lo) var(--hi) var(--hi) var(--lo);
  background: color-mix(in srgb, var(--bg) 80%, #244);
}

.vscroll {
  width: 14px;
  flex-direction: column;
}

.hscroll {
  height: 14px;
}

.vscroll i, .hscroll i {
  flex: none;
  width: 10px;
  height: 10px;
  background: var(--hi);
  clip-path: polygon(50% 0, 100% 100%, 0 100%);
}

.vscroll .down {
  clip-path: polygon(0 0, 100% 0, 50% 100%);
}

.hscroll .left {
  clip-path: polygon(0 50%, 100% 0, 100% 100%);
}

.hscroll .right {
  clip-path: polygon(0 0, 100% 50%, 0 100%);
}

.thumb, .gap {
  flex: 1;
}

.thumb {
  background: var(--bg);
  border: 2px solid;
  border-color: var(--hi) var(--lo) var(--lo) var(--hi);
}

.list {
  padding: 2px 3px;
  overflow: hidden;
}

.list li {
  height: 15px;
  margin: 1px 0 3px;
  line-height: 16px;
  white-space: pre;
}

.list .selected {
  background: #000;
  color: var(--bg);
}

.tick {
  appearance: none;
  width: 13px;
  height: 13px;
  border: 1px solid;
  border-color: var(--lo) var(--hi) var(--hi) var(--lo);
  background: #9bdada;
}

.tick:checked::after {
  content: "";
  display: block;
  width: 11px;
  height: 10px;
  background: #b0105a;
  clip-path: polygon(5% 35%, 30% 50%, 40% 65%, 90% 0, 100% 5%, 45% 100%, 25% 100%);
}

/* main window */
.editor {
  flex: 1;
  min-height: 0;
  margin: 0 0 6px 8px;
  display: flex;
  flex-direction: column;
  background: #000;
}

.titlebar {
  display: flex;
  align-items: center;
  height: 30px;
  padding: 0 10px 0 8px;
  background: #fff;
  color: #999;
  font: 14px/20px "Open Sans", sans-serif;
}

.titlebar.active {
  color: #000;
}

.titlebar span {
  flex: 1;
  margin-left: 5px;
}

.titlebar-main {
  height: 24px;
  padding-bottom: 8px;
}

.win-buttons {
  overflow: visible;
}

.app-icon {
  width: 16px;
  height: 15px;
}

.close-x {
  width: 12px;
  height: 20px;
}

.close-x svg {
  display: block;
  width: 12px;
  height: 12px;
}

.topbar {
  display: flex;
  height: 55px;
  border-top: 1px solid #556;
  font: bold 15px/18px "Liberation Serif", serif;
}

.menubar {
  flex: 1;
  display: flex;
  align-items: center;
  gap: 15px;
  padding: 0 13px 4px;
}

.help {
  margin-left: auto;
}

.brand {
  width: 406px;
  display: flex;
  align-items: center;
  padding-bottom: 4px;
  overflow: hidden;
  white-space: nowrap;
}

.brand > svg {
  flex: none;
  margin-left: 4px;
}

.brand-name {
  flex: none;
  width: 144px;
  display: flex;
  flex-direction: column;
  align-items: center;
  gap: 8px;
}

.brand-name b {
  font-size: 24px;
}

.brand-name i {
  font-size: 14px;
}

.brand-date {
  flex: none;
  width: 104px;
  padding-left: 4px;
  display: flex;
  flex-direction: column;
  align-items: flex-end;
  font: italic bold 15px/15px "Liberation Mono", monospace;
}

.brand-date svg {
  margin: 6px 20px 0 0;
}

.brand-date span:nth-child(2) {
  margin-right: 12px;
}

.workspace {
  flex: 1;
  min-height: 0;
  display: flex;
  border-top: 1px solid #000;
}

.sidebar {
  width: 157px;
  display: flex;
  flex-direction: column;
  padding: 3px 3px 0 2px;
  border-left: 1px solid #244;
  border-right: 2px solid #000;
  background: #52ceb0;
}

.job-line {
  height: 19px;
  padding-left: 1px;
  border: 1px solid #000;
  background: #9bdada;
  font-weight: normal;
  line-height: 17px;
  white-space: nowrap;
  overflow: hidden;
}

.job-matrix {
  margin-top: 2px;
  padding: 2px;
  border: 1px solid #000;
}

.job-matrix button {
  width: 100%;
  height: 21px;
  padding-left: 2px;
  text-align: left;
  font-weight: normal;
}

.layer-panel {
  flex: 1;
  margin-top: 4px;
  border-left: 3px solid #2e7f68;
  border-top: 1px solid #2e7f68;
  overflow: hidden;
}

.layers {
  width: 123px;
  height: 100%;
  border-right: 2px solid #c8f4f2;
  padding: 3px 4px 0 1px;
}

.layer-group {
  margin-bottom: 3px;
  padding: 1px 2px 1px 1px;
  background: #000;
}

.layer {
  display: flex;
  align-items: center;
  height: 16px;
  font-size: 12px;
  line-height: 14px;
}

.layer span {
  flex: 1;
  display: flex;
  align-items: center;
  height: 14px;
  margin-left: auto;
  padding: 0 1px;
  background: #9bdada;
}

.layer input {
  appearance: none;
  width: 14px;
  height: 14px;
  margin-right: 18px;
  border: 2px solid #fff;
  background: #fff;
  box-shadow: inset 0 0 0 2px #000;
}

.layer svg {
  width: 8px;
  height: 7px;
  margin-left: auto;
}

.layer .grid-mark {
  width: 6px;
  height: 6px;
  margin-left: 5px;
}

.layer .work {
  width: 14px;
  height: 14px;
  margin: 0 2px 0 0;
}

.layer.active input {
  margin-right: 2px;
  border-color: #00a;
}

.white span {
  background: #fff;
}

.mask span {
  background: #00a078;
}

.signal span {
  background: #ffc84c;
}

.drill span {
  background: #9ab2bc;
}

.rout span {
  background: #dcdcdc;
}

.board {
  flex: 1;
  min-width: 0;
  height: 100%;
  background: #000;
}

.toolbox {
  width: 156px;
  display: flex;
  flex-direction: column;
  border-left: 1px solid #2e7f68;
}

.tool {
  height: 40px;
  background: #9bdada;
  border-bottom: 2px solid #000;
}

.tool-red {
  border: 3px solid #d22;
}

.tool-blank {
  background: #fff;
}

.tool-rows i {
  display: block;
  height: 31px;
  background: #9bdada;
  border-bottom: 3px solid #000;
}

.tool-end {
  height: 66px;
}

.overview {
  flex: 1;
  min-height: 0;
  background: #000;
}

.coords {
  height: 46px;
  margin-bottom: 2px;
  padding: 6px 4px;
  border-top: 2px solid #a4ecda;
  border-bottom: 2px solid #2e7f68;
  background: #52ceb0;
}

.command {
  display: flex;
  height: 33px;
  border-bottom: 2px solid #000;
  background: #52ceb0;
}

.prompt {
  flex: 1;
  padding: 6px 0 0 659px;
  background: #ffffcc;
  border-right: 2px solid #000;
  font-size: 12px;
}

.command .option {
  width: 71px;
  margin: 2px -6px 2px 6px;
}

.status {
  height: 32px;
  padding-top: 4px;
  border-top: 2px solid #679490;
  border-bottom: 2px solid #cfd;
  outline: 1px solid #000;
  outline-offset: -5px;
  background: #b4ffff;
  font-size: 12px;
  line-height: 20px;
  text-align: center;
}

/* windows on the desktop */
.window {
  position: absolute;
  display: flex;
  flex-direction: column;
  background: #52ceb0;
  box-shadow: 0 2px 10px rgba(0, 0, 0, .5);
}

.checklist {
  left: 1656px;
  top: 80px;
  width: 384px;
  background: #9bdada;
}

.check-menu {
  width: 138px;
  height: 35px;
  display: flex;
  align-items: center;
  gap: 16px;
  padding-left: 12px;
  outline: 1px solid #000;
  font-family: "Liberation Serif", serif;
}

.check-name {
  height: 21px;
  border: 1px solid #000;
  text-align: center;
  font: bold 15px/18px "Liberation Serif", serif;
}

.check-body {
  display: flex;
  justify-content: space-between;
  padding: 1px 4px 7px 3px;
  background: #52ceb0;
  border-top: 1px solid #2e7f68;
}

.check-body > .vscroll .gap {
  flex: 168;
}

.check-body > .vscroll .thumb {
  flex: 408;
}

.cards {
  --bg: #9bdada;
  --hi: #c8f4f2;
  --lo: #4f8080;
  width: 355px;
  border: solid #000;
  border-width: 0 1px;
}

.card {
  padding-top: 1px;
  border-bottom: 3px solid #000;
  background: #9bdada;
  font-weight: normal;
}

.card-head {
  display: grid;
  grid-template-columns: 28px 20px 100px 43px 103px 29px;
  gap: 5px;
  align-items: center;
  height: 30px;
  padding-left: 3px;
}

.card-head svg {
  width: 20px;
  height: 20px;
}

.card-head .tick {
  align-self: start;
  margin-top: 4px;
}

.card-head h3 {
  overflow: hidden;
  white-space: nowrap;
  font: bold 14px/18px "Liberation Serif", serif;
}

.card-head button, .card-head .sunken {
  width: 100%;
  height: 29px;
}

.card-head .sunken {
  padding: 0 0 10px 5px;
}

.card-head .query {
  font: bold 22px/20px "Liberation Sans", sans-serif;
  outline: 1px solid #000;
  outline-offset: -5px;
}

.card-links {
  display: grid;
  grid-template-columns: 112px 115px 112px;
  gap: 5px;
  padding-left: 2px;
  margin-top: 4px;
}

.card-links button {
  height: 23px;
  font: bold 15px/18px "Liberation Serif", serif;
}

.card-run {
  display: flex;
  align-items: center;
  gap: 5px;
  height: 38px;
  padding-left: 3px;
}

.card-run button {
  width: 29px;
  height: 29px;
}

.card-run svg {
  display: block;
  width: 23px;
  height: 23px;
  margin: auto;
}

.card-run .stop svg {
  outline: 1px solid #d22;
  outline-offset: -2px;
}

.card-run p {
  flex: 1;
  padding-top: 2px;
  line-height: 15px;
  white-space: nowrap;
}

.card-run p span {
  display: block;
  padding-left: 31px;
}

.flag {
  width: 17px;
  height: 33px;
  margin-left: -3px;
  border: 1px solid #000;
  background: #ff1818;
  font-size: 12px;
  line-height: 30px;
  text-align: center;
}

.flag.ok {
  background: #18e818;
}

.card-msg {
  height: 20px;
  padding-left: 2px;
  border-top: 1px solid #000;
  background: #ffffcc;
  line-height: 20px;
  white-space: nowrap;
  overflow: hidden;
}

.check-close {
  height: 27px;
  margin: 1px 2px;
  font-family: "Liberation Serif", serif;
}

/* results viewers */
.viewer {
  width: 495px;
}

.viewer-front {
  left: 165px;
  top: 463px;
  height: 605px;
}

.viewer-back {
  left: 17px;
  top: 709px;
  height: 397px;
}

.viewer-name {
  height: 29px;
  border: 3px solid #9bdada;
  border-top-width: 2px;
  outline: 1px solid #000;
  box-shadow: inset 2px 2px #a4ecda, inset -2px -2px #2e7f68;
  text-align: center;
  font: bold 15px/24px "Liberation Serif", serif;
}

.viewer-body {
  flex: 1;
  min-height: 0;
  display: flex;
  border: solid #000;
  border-width: 3px 1px 2px;
}

.viewer-left {
  width: 171px;
  display: flex;
  flex-direction: column;
  border-right: 3px solid #000;
}

.left-head {
  display: flex;
  gap: 3px;
  height: 28px;
  padding: 1px 0 1px 3px;
  border-bottom: 1px solid #000;
  font-style: italic;
}

.left-head button {
  width: 45px;
  font-weight: normal;
  font-style: italic;
}

.left-head button:last-child {
  width: 37px;
}

.left-head b {
  width: 78px;
  border: solid #000;
  border-width: 0 1px;
  background: #9bdada;
  line-height: 25px;
  text-align: center;
}

.scroll-area {
  flex: 1;
  min-height: 0;
  display: grid;
  grid-template-columns: 1fr 14px;
  grid-template-rows: 1fr 14px;
  gap: 5px;
  padding-bottom: 2px;
}

.replace {
  display: flex;
  height: 33px;
  padding: 1px 1px 1px 5px;
  border: 1px solid #000;
}

.replace .option {
  flex: 1;
}

.viewer-right {
  flex: 1;
  min-width: 0;
  display: flex;
  flex-direction: column;
}

.right-head {
  display: flex;
  height: 29px;
  padding: 1px 2px;
  background: #9bdada;
  line-height: 26px;
}

.right-head button {
  flex: 1;
  font-style: italic;
}

.right-head label {
  width: 51px;
}

.right-head .option {
  width: 60px;
}

.viewer-right .scroll-area {
  padding-right: 2px;
}

.viewer-right .thumb {
  flex: 185;
}

.viewer-right .gap {
  flex: 110;
}

.nav-row {
  display: flex;
  gap: 4px;
  height: 26px;
  padding: 1px 2px;
  line-height: 24px;
}

.nav-row button {
  width: 44px;
  white-space: nowrap;
  line-height: 20px;
}

.nav-row button:first-child {
  width: 53px;
}

.nav-row label {
  width: 54px;
}

.nav-row .sunken {
  flex: 1;
  min-width: 0;
  padding: 0 0 4px 5px;
}

.zoom-row {
  display: flex;
  height: 33px;
  line-height: 30px;
}

.zoom-cell {
  width: 125px;
  padding: 1px 1px 1px 4px;
  border: 1px solid #000;
  border-right-width: 2px;
}

.zoom-cell .option, .sv-cell .option {
  height: 100%;
}

.sv {
  width: 28px;
  background: #9bdada;
  border: solid #000;
  border-width: 1px 0;
}

.sv-cell {
  --bg: #18e818;
  --hi: #a4f4a4;
  --lo: #1b8a30;
  width: 68px;
  padding: 1px 2px 1px 5px;
  border: 1px solid #000;
  border-left: 0;
  background: #18e818;
}

.show-all {
  display: flex;
  align-items: center;
  gap: 4px;
  width: 95px;
  height: 26px;
  margin: 1px 0 0 2px;
  border: 2px solid #c8f4f2;
  white-space: nowrap;
}

.show-all .tick {
  flex: none;
}

.edit-row {
  display: flex;
  justify-content: flex-end;
  gap: 4px;
  height: 34px;
  padding: 2px;
}

.edit-row button, .hist-edit button, .viewer-foot button {
  width: 30px;
}

.edit-row svg, .hist-edit svg, .viewer-foot svg {
  display: block;
  width: 22px;
  height: 22px;
  margin: auto;
}

.edit-row .undo {
  width: 34px;
}

.edit-row .undo svg {
  width: 26px;
}

.measure {
  height: 20px;
  border: solid #000;
  border-width: 0 1px;
  line-height: 20px;
  text-align: center;
}

.erf {
  height: 22px;
  padding-left: 2px;
  border: 1px solid #000;
  border-top-width: 2px;
  background: #ffffcc;
  line-height: 20px;
}

.viewer-foot {
  display: flex;
  gap: 4px;
  height: 34px;
  padding: 2px 2px 3px;
  background: #9bdada;
}

.viewer-foot button:first-child {
  flex: 1;
}

.viewer-foot .on {
  box-shadow: inset 0 0 0 2px #d22;
}

/* histogram */
.histogram {
  left: 1370px;
  top: 465px;
  width: 467px;
  border: 1px solid #2e7f68;
  border-top: 0;
}

.hist-top {
  display: flex;
  gap: 3px;
  margin: 1px 5px 4px 3px;
  padding-top: 3px;
}

.hist-left {
  width: 103px;
  display: flex;
  flex-direction: column;
  border: 1px solid #000;
  background: #9bdada;
}

.radios {
  height: 138px;
  display: flex;
  flex-direction: column;
  gap: 9px;
  padding-top: 6px;
  border: solid #000;
  border-width: 1px 1px 2px;
}

.radios label {
  display: flex;
  align-items: center;
  gap: 7px;
  padding-left: 6px;
}

.radios input {
  appearance: none;
  width: 10px;
  height: 10px;
  border: 2px solid;
  border-color: var(--hi) var(--lo) var(--lo) var(--hi);
  transform: rotate(45deg);
}

.radios input:checked {
  background: #c00050;
  border-color: var(--lo) #fff #fff var(--lo);
}

.shape-area {
  display: flex;
  gap: 5px;
  height: 115px;
}

.shape-area .list {
  flex: 1;
}

.hist-edit {
  display: flex;
  gap: 4px;
  padding: 2px;
}

.hist-edit button {
  height: 29px;
}

.hist-right {
  flex: 1;
  min-width: 0;
  display: flex;
  flex-direction: column;
}

.chart {
  height: 222px;
  display: flex;
  flex-direction: column;
  border: 1px solid #000;
  box-shadow: inset 1px 1px #4f8080;
  background: #9bdada;
}

.chart h3 {
  align-self: center;
  margin-top: 3px;
  padding: 3px 2px 0;
  border: 1px solid #000;
  box-shadow: 2px 2px #808080;
  background: #b4ffff;
  font-style: italic;
  line-height: 18px;
}

.bars {
  flex: 1;
  display: flex;
  align-items: flex-end;
  padding-left: 5px;
  border-bottom: 4px solid #000;
  line-height: 15px;
}

.bars div {
  width: 55px;
  display: flex;
  flex-direction: column;
  align-items: center;
  white-space: nowrap;
}

.bars i {
  width: 100%;
  border: solid #000;
  border-width: 1px 0 0 1px;
  background: #b4ffff;
}

.bars div:last-child i {
  border-right-width: 1px;
}

.bars .low {
  color: #d22;
}

.ranges {
  display: flex;
  height: 30px;
  margin: 1px 0 6px 5px;
  line-height: 15px;
}

.ranges p {
  width: 55px;
  padding: 2px 4px 0 14px;
  border: 1px solid #000;
  border-right: 0;
  background: #b4ffff;
}

.ranges p:last-child {
  border-right: 1px solid #000;
}

.ranges span {
  display: block;
  padding-left: 9px;
}

.chart .thumb {
  flex: 161;
}

.chart .gap {
  flex: 162;
}

.resolution {
  display: flex;
  height: 65px;
  border: 2px solid #000;
  background: #9bdada;
}

.resolution .list {
  width: 54px;
}

.resolution .vscroll {
  margin-left: 5px;
}

.slider {
  flex: 1;
  display: flex;
  flex-direction: column;
  padding: 2px 2px 0;
  border-left: 1px solid #000;
  text-align: center;
}

.slider output {
  padding: 5px 0 2px 26px;
  line-height: 16px;
  text-align: left;
}

.slider input {
  appearance: none;
  width: 100%;
  height: 15px;
  border: 2px solid;
  border-color: var(--lo) var(--hi) var(--hi) var(--lo);
  background: #86b8b8;
}

.slider input::-webkit-slider-thumb {
  appearance: none;
  width: 30px;
  height: 11px;
  border: 2px solid;
  border-color: var(--hi) var(--lo) var(--lo) var(--hi);
  background: linear-gradient(to right, #9bdada 48%, #4f8080 48%, #c8f4f2 56%, #9bdada 56%);
}

.splitter {
  display: flex;
  justify-content: flex-end;
  height: 6px;
  padding-right: 9px;
  border-top: 1px solid #2e7f68;
}

.splitter i {
  width: 10px;
  height: 10px;
  margin-top: -5px;
}

.map {
  height: 163px;
  display: flex;
  justify-content: center;
  align-items: center;
  margin: 1px 5px 2px 4px;
  border: 1px solid #000;
  box-shadow: 0 0 0 1px #2e7f68;
}

.hist-info {
  display: flex;
  gap: 4px;
  height: 42px;
  margin: 0 5px;
}

.hist-info button {
  width: 30px;
}

.hist-info svg {
  display: block;
  width: 22px;
  height: 22px;
  margin: auto;
}

.hist-info .wide {
  width: 38px;
}

.hist-info .wide svg {
  width: 30px;
  height: 30px;
}

.hist-info p {
  flex: 1;
  padding-left: 3px;
  border: 1px solid #000;
  background: #9bdada;
  line-height: 40px;
}

.hist-close {
  height: 27px;
  margin-top: 3px;
  box-shadow: 0 -1px #000;
}

/* input method bar */
.ime {
  position: absolute;
  left: 1594px;
  top: 1085px;
  display: flex;
  align-items: center;
  width: 164px;
  height: 25px;
  overflow: hidden;
  background: linear-gradient(to right, transparent 14px, #fff 14px);
  color: #445;
  font: bold 15px/20px "Noto Sans CJK SC", sans-serif;
}

.ime svg {
  flex: none;
}

.ime-logo {
  width: 28px;
  height: 26px;
}

.ime span {
  margin: 0 6px;
}

/* taskbar */
.taskbar {
  display: flex;
  height: 23px;
  overflow: hidden;
  background: #101010;
  color: #fff;
  font: 13px/38px "Open Sans", "Noto Sans CJK SC", sans-serif;
}

.start {
  width: 55px;
  height: 40px;
  padding: 0 0 0 16px;
}

.start svg {
  display: block;
  width: 17px;
  height: 17px;
  margin-top: 6px;
}

.tasks {
  flex: 1;
  display: grid;
  grid-template-columns: repeat(17, 1fr);
}

.tasks a {
  display: flex;
  gap: 4px;
  height: 40px;
  padding-left: 6px;
  white-space: nowrap;
  overflow: hidden;
}

.tasks svg {
  flex: none;
  width: 23px;
  height: 24px;
  margin-top: 8px;
}

.tasks .alert {
  background: #9a501c;
}

.tasks .current {
  background: #333;
}

.tray {
  width: 178px;
  display: flex;
  gap: 9px;
  padding-left: 6px;
}

.tray svg {
  width: 16px;
  height: 16px;
  margin-top: 13px;
}

.taskbar time {
  width: 64px;
  line-height: 20px;
  font-size: 12px;
}

.notify {
  width: 16px;
  height: 16px;
  margin: 12px 24px 0 0;
}
```
